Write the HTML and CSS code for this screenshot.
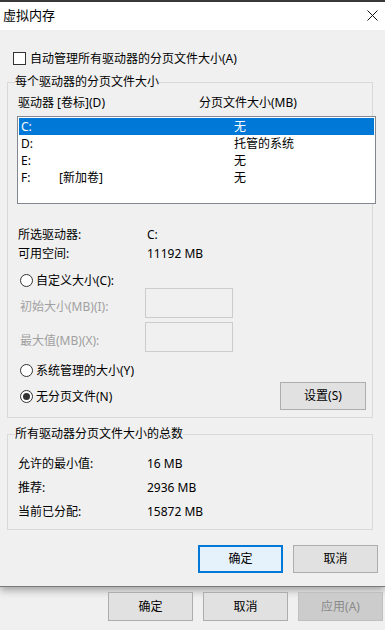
FILE: index.html
```html
<!DOCTYPE html>
<html lang="zh-CN">
<head>
<meta charset="utf-8">
<title>虚拟内存</title>
<link rel="stylesheet" href="styles.css">
</head>
<body>
<div class="frame-top"></div>
<div class="dialog">
  <div class="titlebar">
    <span class="title">虚拟内存</span>
    <svg class="close" width="11" height="11" viewBox="0 0 11 11"><path d="M0.5 0.5 L10.5 10.5 M10.5 0.5 L0.5 10.5" stroke="#111" stroke-width="1" fill="none"/></svg>
  </div>
  <div class="content">
    <label class="check-row"><span class="checkbox"></span><span>自动管理所有驱动器的分页文件大小(A)</span></label>

    <fieldset class="group group-drives">
      <legend>每个驱动器的分页文件大小</legend>
      <div class="list-head"><span class="col1">驱动器 [卷标](D)</span><span>分页文件大小(MB)</span></div>
      <div class="listbox">
        <div class="row selected"><span class="c-drive">C:</span><span class="c-label"></span><span>无</span></div>
        <div class="row"><span class="c-drive">D:</span><span class="c-label"></span><span>托管的系统</span></div>
        <div class="row"><span class="c-drive">E:</span><span class="c-label"></span><span>无</span></div>
        <div class="row"><span class="c-drive">F:</span><span class="c-label">[新加卷]</span><span>无</span></div>
      </div>
      <div class="info first"><span class="key">所选驱动器:</span><span>C:</span></div>
      <div class="info"><span class="key">可用空间:</span><span>11192 MB</span></div>

      <div class="radio-row r-custom"><span class="radio"></span><span>自定义大小(C):</span></div>
      <div class="field-row"><span class="field-label">初始大小(MB)(I):</span><span class="input"></span></div>
      <div class="field-row second"><span class="field-label">最大值(MB)(X):</span><span class="input"></span></div>
      <div class="radio-row r-system"><span class="radio"></span><span>系统管理的大小(Y)</span></div>
      <div class="last-row">
        <div class="radio-inline"><span class="radio checked"></span><span>无分页文件(N)</span></div>
        <button class="btn btn-set">设置(S)</button>
      </div>
    </fieldset>

    <fieldset class="group group-total">
      <legend>所有驱动器分页文件大小的总数</legend>
      <div class="total first"><span class="key">允许的最小值:</span><span>16 MB</span></div>
      <div class="total"><span class="key">推荐:</span><span>2936 MB</span></div>
      <div class="total"><span class="key">当前已分配:</span><span>15872 MB</span></div>
    </fieldset>

    <div class="dialog-buttons">
      <button class="btn btn-default">确定</button>
      <button class="btn">取消</button>
    </div>
  </div>
</div>
<div class="parent-buttons">
  <button class="btn">确定</button>
  <button class="btn">取消</button>
  <button class="btn btn-disabled">应用(A)</button>
</div>
</body>
</html>
```
FILE: styles.css
```css
* { box-sizing: border-box; }
html, body { margin: 0; padding: 0; }
body {
  width: 385px;
  height: 630px;
  overflow: hidden;
  background: #f0f0f0;
  font-family: "Noto Sans", "Noto Sans CJK SC", sans-serif;
  font-size: 12px;
  color: #000;
}
.frame-top { height: 2px; background: #3c3c3c; }
.dialog {
  background: #f0f0f0;
  border-bottom: 1px solid #7a7a7a;
  box-shadow: 0 3px 8px rgba(0,0,0,0.35);
}
.titlebar {
  height: 28px;
  background: #fff;
  display: flex;
  align-items: center;
  justify-content: space-between;
  padding: 0 7px 2px 3px;
}
.title { font-size: 13px; line-height: 16px; }
.close { display: block; }
.content { padding: 0; }

.check-row {
  display: flex;
  align-items: center;
  height: 13px;
  margin-top: 22px;
  padding-left: 13px;
  line-height: 13px;
}
.checkbox {
  width: 13px; height: 13px;
  border: 1px solid #333;
  background: #fff;
  margin-right: 4px;
  flex: none;
}

.group {
  margin: 0 0 0 7px;
  width: 366px;
  padding: 0;
  border: 1px solid #d9d9d9;
  min-width: 0;
}
.group legend {
  margin-left: 7px;
  padding: 0;
  line-height: 16px;
  height: 16px;
}
.group-drives { margin-top: 9px; padding-bottom: 7px; }
.list-head {
  display: flex;
  margin-top: 5px;
  padding-left: 10px;
  line-height: 16px;
}
.list-head .col1 { width: 181px; }
.listbox {
  margin: 5px 0 0 9px;
  width: 359px;
  height: 88px;
  border: 1px solid #828790;
  background: #fff;
  padding: 1px;
}
.row {
  display: flex;
  height: 17px;
  line-height: 17px;
  padding-left: 2px;
}
.row.selected { background: #0078d7; color: #fff; }
.c-drive { width: 38px; }
.c-label { width: 175px; }

.info {
  display: flex;
  height: 19px;
  line-height: 19px;
  padding-left: 10px;
}
.info.first { margin-top: 21px; }
.info .key, .total .key { width: 129px; }

.radio-row, .radio-inline {
  display: flex;
  align-items: center;
  height: 15px;
  line-height: 15px;
}
.radio-row { padding-left: 12px; }
.r-custom { margin-top: 10px; }
.r-system { margin-top: 11px; }
.radio {
  width: 13px; height: 13px;
  border: 1px solid #333;
  border-radius: 50%;
  background: #fff;
  margin-right: 3px;
  flex: none;
  display: flex;
  align-items: center;
  justify-content: center;
}
.radio.checked::after {
  content: "";
  width: 7px; height: 7px;
  border-radius: 50%;
  background: #333;
}

.field-row {
  display: flex;
  align-items: center;
  height: 30px;
  padding-left: 12px;
}
.field-row.second { margin-top: 4px; }
.field-label {
  width: 125px;
  color: #a0a0a0;
  padding-top: 5px;
}
.input {
  width: 88px;
  height: 30px;
  border: 1px solid #cccccc;
  background: #f0f0f0;
}

.last-row {
  display: flex;
  align-items: center;
  justify-content: space-between;
  height: 28px;
  margin-top: 4px;
  padding: 0 6px 0 12px;
}

.btn {
  font-family: inherit;
  font-size: 12px;
  color: #000;
  background: #e1e1e1;
  border: 1px solid #adadad;
  height: 28px;
  width: 86px;
  padding: 0;
  margin: 0;
  line-height: 26px;
}
.btn-set { width: 86px; }

.group-total { margin-top: 8px; padding-bottom: 5px; }
.total {
  display: flex;
  height: 24px;
  line-height: 24px;
  padding-left: 10px;
}
.total.first { margin-top: 10px; }

.dialog-buttons {
  display: flex;
  justify-content: flex-end;
  gap: 10px;
  margin-top: 15px;
  padding: 0 7px 13px 0;
}
.dialog-buttons .btn { width: 85px; }
.btn-default {
  border: 2px solid #0078d7;
  background: #e5f1fb;
  line-height: 24px;
}

.parent-buttons {
  display: flex;
  justify-content: flex-end;
  gap: 10px;
  margin-top: 5px;
  padding-right: 2px;
}
.parent-buttons .btn { width: 85px; height: 29px; }
.btn-disabled {
  background: #cccccc;
  border-color: #bfbfbf;
  color: #8a8a8a;
}
```
